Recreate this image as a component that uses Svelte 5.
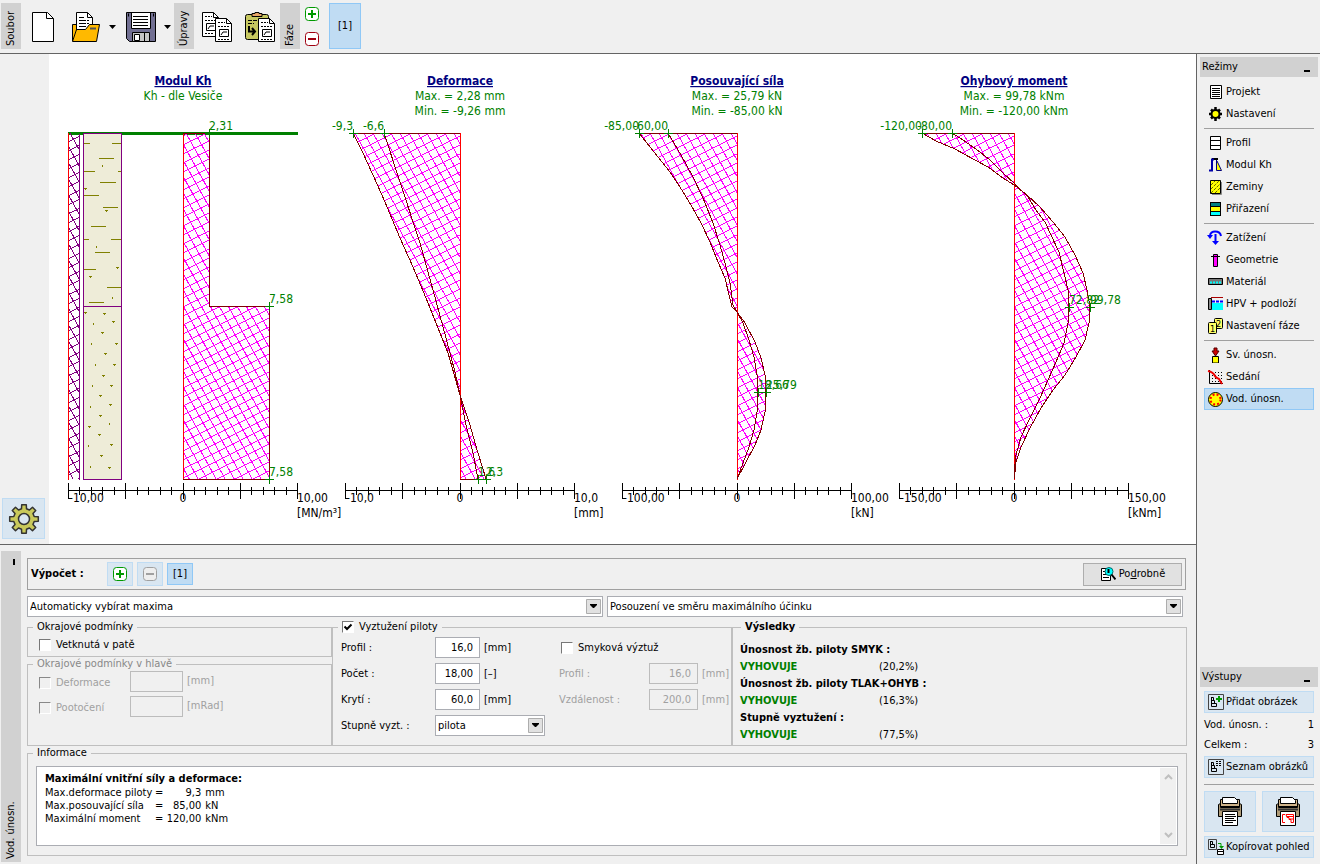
<script>
    const top = 79;
    const bottom = 425;

    const charts = [
        {
            x: 134,
            title: "Modul Kh",
            notes: ["Kh - dle Vesiče"],
            limit: "10,00",
            unit: "[MN/m³]",
            outer: [[0, 79], [26, 79], [26, 252], [86, 252], [86, 425]],
            inner: [],
            marks: [
                { x: 26, y: 79, text: "2,31" },
                { x: 86, y: 252, text: "7,58" },
                { x: 86, y: 425, text: "7,58" },
            ],
        },
        {
            x: 411,
            title: "Deformace",
            notes: ["Max. = 2,28 mm", "Min. = -9,26 mm"],
            limit: "10,0",
            unit: "[mm]",
            outer: [
                [-107, 79], [-97, 99], [-87, 121], [-75, 148], [-60, 184], [-47, 213], [-34, 244],
                [-24, 269], [-12, 299], [0, 341], [10, 371], [18, 399], [26, 425],
            ],
            inner: [
                [-76, 79], [-60, 128], [-40, 189], [-27, 236], [-14, 284], [-5, 318], [0, 341],
                [6, 371], [13, 399], [18, 425],
            ],
            marks: [
                { x: -107, y: 79, text: "-9,3" },
                { x: -76, y: 79, text: "-6,6" },
                { x: 18, y: 425, text: "1,6" },
                { x: 26, y: 425, text: "2,3" },
            ],
        },
        {
            x: 688,
            title: "Posouvající síla",
            notes: ["Max. = 25,79 kN", "Min. = -85,00 kN"],
            limit: "100,00",
            unit: "[kN]",
            outer: [
                [-98, 79], [-79, 103], [-67, 118], [-57, 133], [-46, 151], [-36, 169], [-27, 188],
                [-19, 208], [-12, 224], [-8, 241], [-5, 253], [0, 258], [8, 269], [18, 288], [24, 304],
                [28, 321], [29, 338], [28, 358], [24, 376], [18, 391], [9, 408], [0, 425],
            ],
            inner: [
                [-69, 79], [-56, 101], [-44, 123], [-34, 144], [-24, 169], [-17, 191], [-11, 213],
                [-7, 229], [-4, 251], [0, 258], [6, 269], [12, 286], [17, 303], [20, 321], [21, 338],
                [20, 358], [17, 376], [12, 393], [6, 409], [0, 425],
            ],
            marks: [
                { x: -98, y: 79, text: "-85,00" },
                { x: -69, y: 79, text: "-60,00" },
                { x: 21, y: 338, text: "18,66" },
                { x: 29, y: 338, text: "25,79" },
            ],
        },
        {
            x: 965,
            title: "Ohybový moment",
            notes: ["Max. = 99,78 kNm", "Min. = -120,00 kNm"],
            limit: "150,00",
            unit: "[kNm]",
            outer: [
                [-92, 79], [-78, 87], [-59, 95], [-41, 105], [-26, 113], [-11, 124], [0, 131], [12, 140],
                [26, 153], [39, 168], [51, 183], [61, 201], [69, 219], [73, 236], [76, 253], [75, 269],
                [71, 286], [62, 303], [51, 321], [39, 336], [27, 354], [16, 374], [7, 393], [2, 408],
                [1, 418], [0, 425],
            ],
            inner: [
                [-62, 79], [-51, 86], [-38, 95], [-24, 106], [-11, 119], [0, 129], [14, 143], [22, 156],
                [31, 168], [37, 181], [45, 198], [50, 219], [54, 236], [55, 253], [54, 269], [50, 289],
                [42, 308], [34, 326], [26, 344], [16, 364], [7, 383], [2, 401], [0, 419],
            ],
            marks: [
                { x: -92, y: 79, text: "-120,00" },
                { x: -62, y: 79, text: "-80,00" },
                { x: 55, y: 253, text: "72,82" },
                { x: 76, y: 253, text: "99,78" },
            ],
        },
    ];

    const ticks = Array.from({ length: 21 }, (_, i) => ({
        x: Math.round(-115 + i * 11.45),
        major: i % 5 === 0,
    }));

    const points = (list) => list.map((p) => p.join(",")).join(" ");
    const area = (list) => points([[0, top], ...list, [0, bottom]]);

    // two families of parallel lines, at right angles to each other
    const hatch = (left, right, step) => {
        let d = "";
        const width = right - left;
        const rise = width * 0.5;
        for (let y = top; y < bottom + rise + step; y += step) {
            d += `M${left} ${y}L${right} ${y - rise}`;
        }
        const fall = width * 1.8;
        for (let y = top - fall; y < bottom; y += step * 1.8) {
            d += `M${left} ${y}L${right} ${y + fall}`;
        }
        return d;
    };
    const magenta = hatch(-120, 120, 9);
    const violet = hatch(-115, -104, 9);

    // outline of the settings gear, eight teeth
    const gear = Array.from({ length: 8 }, (_, i) =>
        [[-14, 10.5], [-9, 14.5], [9, 14.5], [14, 10.5]].map(([deg, r]) => {
            const a = ((i * 45 + deg) * Math.PI) / 180;
            return [(r * Math.sin(a)).toFixed(1), (-r * Math.cos(a)).toFixed(1)];
        })
    ).flat();

    // clay dashes: x, y, length
    const dashes = [
        [-99, 89, 6], [-71, 89, 9], [-84, 104, 15], [-99, 117, 11], [-65, 117, 3], [-83, 128, 16],
        [-99, 141, 15], [-80, 153, 15], [-92, 172, 15], [-99, 185, 5], [-72, 185, 10], [-88, 198, 15],
        [-99, 215, 12], [-76, 233, 14], [-94, 248, 15],
    ];
    // sand grains
    const grains = [
        [-81, 111], [-98, 134], [-77, 156], [-87, 192], [-66, 213], [-93, 222], [-71, 243], [-98, 258],
        [-79, 259], [-90, 269], [-70, 267], [-81, 278], [-92, 289], [-67, 289], [-78, 299], [-88, 310],
        [-69, 310], [-80, 321], [-91, 331], [-72, 331], [-83, 341], [-93, 352], [-73, 350], [-83, 361],
        [-74, 369], [-94, 372], [-84, 380], [-95, 391], [-72, 390], [-82, 401], [-93, 412], [-74, 413],
    ];

    const icons = {
        project: `<path d="M3.5 1.5h11v13h-11z" fill="#fff" stroke="#000"/><path d="M5 4.5h8M5 6.5h8M5 8.5h8M5 10.5h8M5 12.5h8" stroke="#000"/>`,
        settings: `<path d="M8.500 1v14M2 8h13M4 3.500l9 9M13 3.500l-9 9" stroke="#000" stroke-width="2.500"/><circle cx="8.500" cy="8" r="4" fill="#ff0" stroke="#000" stroke-width="2"/>`,
        profile: `<path d="M3.5 1.5h10v13h-10zM3.5 5.5h10M3.5 10.5h10" fill="#fff" stroke="#000"/>`,
        modul: `<path d="M5 2h6" stroke="#000" stroke-width="2"/><path d="M2 13.500h3v-11h2" fill="none" stroke="#00a" stroke-width="2"/><path d="M9.500 3v10.500h5L10 4" fill="#ff0" stroke="#000080"/>`,
        soils: `<path d="M14.5 3v12.500H5" fill="none" stroke="#888"/><path d="M3.5 1.5h10v13h-10z" fill="#ff0" stroke="#000"/><path d="M4 6l4-4M4 10l8-8M4 14l9-9M8 14l5-5" stroke="#660" stroke-dasharray="3 1"/>`,
        assign: `<path d="M3 1h11v14H3z"/><path d="M4 2h9v3H4z" fill="#008080"/><path d="M4 6h9v4H4z" fill="#ff0"/><path d="M4 11h9v3H4z" fill="#0ff"/>`,
        load: `<path d="M3 6c0-6 10-6 11 0" fill="none" stroke="#00f" stroke-width="2"/><path d="M0 5h6l-3 4z" fill="#00f"/><path d="M8.500 4v9" stroke="#00f" stroke-width="2"/><path d="M5 11h7l-3.500 4z" fill="#00f"/>`,
        geometry: `<path d="M6.5 2.5h4v12h-4z" fill="#f0f" stroke="#000"/><path d="M4 4.5h9" stroke="#000"/>`,
        material: `<path d="M1.5 4.5h14v6h-14z" fill="#777" stroke="#000"/><path d="M3 8.500h12" stroke="#0ff" stroke-width="2" stroke-dasharray="2 1"/>`,
        water: `<path d="M1.5 2.5h3v11h-3z" fill="#888" stroke="#000"/><path d="M4 1.5h12" stroke="#a00"/><path d="M5 7h11v7H5z" fill="#0ff"/><path d="M5 5.500h11" stroke="#00f" stroke-width="2" stroke-dasharray="3 1"/>`,
        phase: `<rect x="7.5" y=".5" width="8" height="10" rx="1" fill="#ff6" stroke="#000"/><rect x="1.5" y="4.5" width="8" height="11" rx="1" fill="#ff6" stroke="#000"/><text x="9" y="9" font-size="9">2</text><text x="3" y="14" font-size="9">1</text>`,
        vertical: `<path d="M5.5 9.5h6V16h-6z" fill="#ff0" stroke="#000"/><path d="M7 1h3v3h2l-3.500 5L5 4h2z" fill="#c00" stroke="#500"/>`,
        settlement: `<path d="M2 3.5h14M2 6.5h14M2 9.5h14M2 12.5h14" stroke="#000" stroke-dasharray="1 2"/><path d="M2.5 1v13.500H16" fill="none" stroke="#000"/><path d="M1 2c5 1 6 3 7 5s2 2 4 3l3 5" fill="none" stroke="#e00" stroke-width="2"/>`,
        horizontal: `<circle cx="8.500" cy="8.500" r="7" fill="#ff0" stroke="#000"/><circle cx="8.500" cy="8.500" r="5" fill="none" stroke="#f00" stroke-width="2" stroke-dasharray="2 2"/>`,
        addPicture: `<path d="M.5.5h15v15H.5z" fill="none" stroke="#444"/><path d="M3.5 3v9.500h5v-3h-5M6.5 9V6.500h-3M3.5 3.5h2v3" fill="none" stroke="#000"/><path d="M11 2v6M8 5h6" stroke="#090" stroke-width="2"/>`,
        pictureList: `<path d="M.5.5h15v15H.5z" fill="none" stroke="#444"/><path d="M3.5 3v9.500h5v-3h-5M6.5 9V6.500h-3M3.5 3.5h2v3" fill="none" stroke="#000"/><path d="M8 2.5h6M8 4.5h6M8 6.5h6" stroke="#000" stroke-dasharray="2 1"/>`,
        copyView: `<path d="M.5.5h8v10H.5z" fill="none" stroke="#444"/><path d="M2.5 2v6.500h4v-3h-4M4.5 5V2.500h-2" fill="none" stroke="#000"/><path d="M10 4.5h3V8" fill="none" stroke="#090"/><path d="M11 7h5l-2.500 3z" fill="#090"/><path d="M9.5 10.5h6v5h-6zM9.5 12.5h6" fill="#fff" stroke="#000"/>`,
        detail: `<path d="M1.5 2.5h9v12h-9z" fill="#fff" stroke="#000"/><path d="M3 11.5h6M3 8.5h3M3 5.5h2" stroke="#000"/><circle cx="9" cy="5.500" r="4" fill="#0ff" stroke="#066"/><path d="M8.500 3v4M11.500 8.500l4 5" stroke="#000" stroke-width="2"/>`,
        add: `<rect x="1.5" y="1.5" width="13" height="13" rx="3" fill="#fff" stroke="#090"/><path d="M4 8h8M8 4v8" stroke="#090" stroke-width="2"/>`,
        remove: `<rect x="1.5" y="1.5" width="13" height="13" rx="3" fill="#fff" stroke="#a00010"/><path d="M4 8h8" stroke="#a00010" stroke-width="2"/>`,
        removeOff: `<rect x="1.5" y="1.5" width="13" height="13" rx="3" fill="#eee" stroke="#a0a0a0"/><path d="M4 8h8" stroke="#a0a0a0" stroke-width="2"/>`,
    };

    const modes = [
        [["project", "Projekt"], ["settings", "Nastavení"]],
        [["profile", "Profil"], ["modul", "Modul Kh"], ["soils", "Zeminy"], ["assign", "Přiřazení"]],
        [
            ["load", "Zatížení"],
            ["geometry", "Geometrie"],
            ["material", "Materiál"],
            ["water", "HPV + podloží"],
            ["phase", "Nastavení fáze"],
        ],
        [["vertical", "Sv. únosn."], ["settlement", "Sedání"], ["horizontal", "Vod. únosn."]],
    ];
    let active = "horizontal";

    const results = [
        ["Únosnost žb. piloty SMYK :", "20,2%"],
        ["Únosnost žb. piloty TLAK+OHYB :", "16,3%"],
        ["Stupně vyztužení :", "77,5%"],
    ];
    const info = [
        ["Max.deformace piloty", "9,3", "mm"],
        ["Max.posouvající síla", "85,00", "kN"],
        ["Maximální moment", "120,00", "kNm"],
    ];
    const rebar = [
        { id: "profil", label: "Profil :", value: "16,0", unit: "[mm]" },
        { id: "pocet", label: "Počet :", value: "18,00", unit: "[–]" },
        { id: "kryti", label: "Krytí :", value: "60,0", unit: "[mm]" },
    ];
    const shear = [
        { id: "sprofil", label: "Profil :", value: "16,0", unit: "[mm]" },
        { id: "vzdal", label: "Vzdálenost :", value: "200,0", unit: "[mm]" },
    ];
    const head = [
        { label: "Deformace", unit: "[mm]" },
        { label: "Pootočení", unit: "[mRad]" },
    ];
</script>

{#snippet icon(name)}
    <svg class="icon" width="16" height="16" viewBox="0 0 16 16" aria-hidden="true">{@html icons[name]}</svg>
{/snippet}

{#snippet arrow()}
    <svg class="drop__arrow" width="15" height="15" viewBox="0 0 15 15" aria-hidden="true">
        <path d="M.5.5h14v14H.5z" fill="#e1e1e1" stroke="#adadad" />
        <path d="M4 5h7v1l-3 3h-1l-3-3z" />
    </svg>
{/snippet}

<div class="app">
    <header class="toolbar">
        <div class="vlabel">Soubor</div>
        <div class="tools tools--file">
            <button class="tool" aria-label="Nový">
                <svg width="24" height="32" viewBox="0 0 24 32">
                    <path d="M1.5 1.5h15l6 6v23h-21z" fill="#fff" stroke="#000" />
                    <path d="M15.5 1.5v6h7" fill="none" stroke="#000" />
                </svg>
            </button>
            <button class="tool" aria-label="Otevřít">
                <svg width="30" height="32" viewBox="0 0 30 32">
                    <path d="M1.5 30V13.500h5v8" fill="#ffb900" stroke="#000" />
                    <path d="M5.5 24.500v-23h11l5 5v14z" fill="#fff" stroke="#000" />
                    <path d="M16.5 1.5v5h5" fill="none" stroke="#000" />
                    <path d="M8 6.5h5M8 9.5h10M8 12.5h10M8 15.5h7" stroke="#000" stroke-dasharray="7 1" />
                    <path d="M1.5 30.500l4-12h9l4-5h10l-3 17z" fill="#ffb900" stroke="#000" />
                    <path d="M19 17.500h6" stroke="#555" stroke-width="2" />
                </svg>
            </button>
            <button class="tool tool--arrow" aria-label="Naposledy otevřené">
                <svg width="7" height="4" viewBox="0 0 7 4"><path d="M0 0h7L3.500 4z" /></svg>
            </button>
            <button class="tool" aria-label="Uložit">
                <svg width="30" height="32" viewBox="0 0 30 32">
                    <path d="M.5 1.5h29v29h-26l-3-3z" fill="#716f92" stroke="#000" />
                    <path d="M5.5 2v15.500h19V2" fill="#fff" stroke="#000" />
                    <path d="M7 5.5h15M7 8.5h15M7 11.5h15M7 14.5h15" stroke="#000" />
                    <path d="M2 4h1M27 4h1" stroke="#000" stroke-width="3" />
                    <path d="M6.5 30.500v-9h17v9z" fill="#c4c4c4" stroke="#000" />
                    <path d="M8.5 23.500h5v6h-5z" fill="#fff" stroke="#000" />
                    <path d="M18.5 22v8" stroke="#000" />
                </svg>
            </button>
            <button class="tool tool--arrow" aria-label="Uložit jako">
                <svg width="7" height="4" viewBox="0 0 7 4"><path d="M0 0h7L3.500 4z" /></svg>
            </button>
        </div>
        <div class="vlabel">Úpravy</div>
        <div class="tools tools--edit">
            <button class="tool" aria-label="Kopírovat">
                <svg width="32" height="32" viewBox="0 0 32 32">
                    <path d="M1.5 1.5h11l5 5v19h-16z" fill="#fff" stroke="#000" />
                    <path d="M12.5 1.5v5h5M5.5 12.5h9v7h-9zM7 18l2-3h4" fill="none" stroke="#000" />
                    <path d="M4 5.5h7M4 9.5h12M4 22.5h9" stroke="#000" stroke-dasharray="2 1" />
                    <path d="M14.5 7.5h11l5 5v18h-16z" fill="#fff" stroke="#000" />
                    <path d="M25.5 7.5v5h5M18.5 18.5h9v7h-9zM20 24l2-3h4" fill="none" stroke="#000" />
                    <path d="M17 11.5h7M17 15.5h12M17 28.5h12" stroke="#000" stroke-dasharray="2 1" />
                </svg>
            </button>
            <button class="tool" aria-label="Vložit">
                <svg width="32" height="32" viewBox="0 0 32 32">
                    <rect x="1.5" y="3.5" width="23" height="25" rx="2" fill="#c6c760" stroke="#000" />
                    <path d="M8 5.5h10v-3h-3v-1h-4v1H8z" fill="#e8a668" stroke="#000" />
                    <path d="M4 9.5h9M4 12.5h6" stroke="#000" stroke-dasharray="4 1" />
                    <path d="M5 15v5.500h6M8 17l3 3.500-3 3.500" fill="none" stroke="#000" stroke-width="2" />
                    <path d="M14.5 7.5h11l5 5v18h-16z" fill="#fff" stroke="#000" />
                    <path d="M25.5 7.5v5h5M18.5 18.5h9v7h-9zM20 24l2-3h4" fill="none" stroke="#000" />
                    <path d="M17 11.5h7M17 15.5h12M17 28.5h12" stroke="#000" stroke-dasharray="2 1" />
                </svg>
            </button>
        </div>
        <div class="vlabel">Fáze</div>
        <div class="phase">
            <button class="tool" aria-label="Přidat fázi">{@render icon("add")}</button>
            <button class="tool" aria-label="Odebrat fázi">{@render icon("remove")}</button>
        </div>
        <button class="tab tab--phase">[1]</button>
    </header>

    <div class="body">
        <main class="main">
            <section class="view">
                <div class="view__side">
                    <button class="soft soft--gear" aria-label="Nastavení kreslení">
                        <svg width="32" height="32" viewBox="-16 -16 32 32">
                            <polygon points={points(gear)} fill="#c9c95a" stroke="#333" stroke-width="1.5" stroke-linejoin="round" />
                            <circle r="5.5" fill="#d9e6f1" stroke="#333" stroke-width="1.5" />
                        </svg>
                    </button>
                </div>
                <svg class="view__charts" viewBox="0 0 1147 490" role="img" aria-label="Průběhy veličin po délce piloty">
                    <defs>
                        {#each charts as chart, i}
                            <clipPath id="area{i}"><polygon points={area(chart.outer)} /></clipPath>
                        {/each}
                        <clipPath id="pile"><rect x="-115" y={top} width="11" height={bottom - top} /></clipPath>
                    </defs>
                    <g transform="translate({charts[0].x} 0)">
                        <path class="soil__ground" d="M-115 79.5H115" />
                        <path class="soil__pile" clip-path="url(#pile)" d={violet} />
                        <path class="soil__axis" d="M-114.5 79v347" />
                        <path class="soil__edge" d="M-103.5 80v346" />
                        <path class="soil__layer" d="M-99.5 79.5h38v346h-38zM-99.5 252.5h38" />
                        {#each dashes as [x, y, w]}
                            <rect class="soil__grain" {x} {y} width={w} height="1" />
                        {/each}
                        {#each grains as [x, y], i}
                            <rect class="soil__grain" {x} {y} width="1" height="2" />
                            {#if i % 3}<rect class="soil__grain" x={x - 1} {y} width="3" height="1" />{/if}
                        {/each}
                    </g>
                    {#each charts as chart, i}
                        <g transform="translate({chart.x} 0)">
                            <path class="hatch" clip-path="url(#area{i})" d={magenta} />
                            <path class="base" d="M.5 79v347" />
                            <polyline class="curve" points={points([[0, top], ...chart.outer])} />
                            <polyline class="curve" points={points(chart.inner)} />
                            {#if chart.outer[chart.outer.length - 1][0] > 0}
                                <path class="curve" d="M0 425.5h{chart.outer[chart.outer.length - 1][0]}" />
                            {/if}
                            <text class="title" y="31">{chart.title}</text>
                            {#each chart.notes as note, n}
                                <text class="note" y={46 + n * 15}>{note}</text>
                            {/each}
                            {#each chart.marks as mark}
                                <path class="cross" d="M{mark.x - 4} {mark.y + 0.5}h9M{mark.x + 0.5} {mark.y - 4}v9" />
                                <text class="mark" class:mark--left={mark.x < 0} x={mark.x} y={mark.y - 3}>{mark.text}</text>
                            {/each}
                            <path class="axis" d="M-115 436.5H115M-114.5 444.5h3" />
                            {#each ticks as tick}
                                <path class="axis" d={tick.major ? `M${tick.x + 0.5} 429v16` : `M${tick.x + 0.5} 433v8`} />
                            {/each}
                            <text x="-114" y="448">-{chart.limit}</text>
                            <text class="zero" y="448">0</text>
                            <text x="114" y="448">{chart.limit}</text>
                            <text x="114" y="463">{chart.unit}</text>
                        </g>
                    {/each}
                </svg>
            </section>

            <section class="panel">
                <div class="vlabel vlabel--panel">
                    <span>Vod. únosn.</span>
                    <span class="vlabel__fold"></span>
                </div>
                <div class="panel__content">
                    <div class="calc">
                        <strong class="calc__title">Výpočet :</strong>
                        <button class="soft soft--small" aria-label="Přidat výpočet">{@render icon("add")}</button>
                        <button class="soft soft--small" aria-label="Odebrat výpočet" disabled>{@render icon("removeOff")}</button>
                        <button class="tab tab--calc">[1]</button>
                        <button class="detail">{@render icon("detail")}<span>Po<u>d</u>robně</span></button>
                    </div>
                    <div class="selects">
                        <span class="drop">
                            <select aria-label="Výběr maxim"><option>Automaticky vybírat maxima</option></select>
                            {@render arrow()}
                        </span>
                        <span class="drop">
                            <select aria-label="Směr posouzení"><option>Posouzení ve směru maximálního účinku</option></select>
                            {@render arrow()}
                        </span>
                    </div>
                    <div class="groups">
                        <div class="groups__left">
                            <fieldset>
                                <legend>Okrajové podmínky</legend>
                                <label class="check check--foot"><input type="checkbox" />Vetknutá v patě</label>
                            </fieldset>
                            <fieldset class="head" disabled>
                                <legend>Okrajové podmínky v hlavě</legend>
                                {#each head as row}
                                    <div class="head__row">
                                        <label class="check"><input type="checkbox" />{row.label}</label>
                                        <input type="text" aria-label={row.label} />
                                        <span>{row.unit}</span>
                                    </div>
                                {/each}
                            </fieldset>
                        </div>
                        <fieldset class="rebar">
                            <legend><label class="check"><input type="checkbox" checked />Vyztužení piloty</label></legend>
                            <div class="rebar__grid">
                                {#each rebar as row}
                                    <label for={row.id}>{row.label}</label>
                                    <input id={row.id} type="text" value={row.value} />
                                    <span>{row.unit}</span>
                                {/each}
                                <label for="stupne">Stupně vyzt. :</label>
                                <span class="drop drop--small">
                                    <select id="stupne"><option>pilota</option></select>
                                    {@render arrow()}
                                </span>
                            </div>
                            <div class="shear">
                                <label class="check shear__check"><input type="checkbox" />Smyková výztuž</label>
                                {#each shear as row}
                                    <label class="off" for={row.id}>{row.label}</label>
                                    <input id={row.id} type="text" value={row.value} disabled />
                                    <span class="off">{row.unit}</span>
                                {/each}
                            </div>
                        </fieldset>
                        <fieldset class="results">
                            <legend>Výsledky</legend>
                            {#each results as [name, use]}
                                <p class="results__name">{name}</p>
                                <p class="results__row"><b>VYHOVUJE</b><span>({use})</span></p>
                            {/each}
                        </fieldset>
                    </div>
                    <fieldset class="info">
                        <legend>Informace</legend>
                        <div class="info__box">
                            <div class="info__text">
                                <h2>Maximální vnitřní síly a deformace:</h2>
                                <table>
                                    <tbody>
                                        {#each info as [name, value, unit]}
                                            <tr><td>{name}</td><td>=</td><td class="num">{value}</td><td>{unit}</td></tr>
                                        {/each}
                                    </tbody>
                                </table>
                            </div>
                            <div class="info__scroll">
                                <svg width="9" height="6" viewBox="0 0 9 6"><path d="M1 5l3.500-3.500L8 5" /></svg>
                                <svg width="9" height="6" viewBox="0 0 9 6"><path d="M1 1l3.500 3.500L8 1" /></svg>
                            </div>
                        </div>
                    </fieldset>
                </div>
            </section>
        </main>

        <aside class="side">
            <h3 class="side__head">Režimy<span class="fold"></span></h3>
            <nav class="modes">
                {#each modes as group}
                    <div class="modes__group">
                        {#each group as [name, label]}
                            <button class="mode" class:mode--active={active === name} on:click={() => (active = name)}>
                                {@render icon(name)}{label}
                            </button>
                        {/each}
                    </div>
                {/each}
            </nav>
            <h3 class="side__head">Výstupy<span class="fold"></span></h3>
            <div class="outputs">
                <button class="soft soft--wide">{@render icon("addPicture")}Přidat obrázek</button>
                <div class="outputs__counts">
                    <div class="count"><span>Vod. únosn. :</span><span>1</span></div>
                    <div class="count"><span>Celkem :</span><span>3</span></div>
                </div>
                <button class="soft soft--wide">{@render icon("pictureList")}Seznam obrázků</button>
                <div class="outputs__print">
                    <button class="soft soft--print" aria-label="Tisk protokolu">
                        <svg width="26" height="32" viewBox="0 0 26 32">
                            <path d="M3.5 10.5v-7h19v7z" fill="#d0b48a" stroke="#000" />
                            <path d="M5.5 7.5v-6h12l3 3v3z" fill="#fff" stroke="#000" />
                            <path d="M1.5 8.5l2-1v4h19v-4l2 1v12h-23z" fill="#b09c78" stroke="#000" />
                            <path d="M3 13.5h20" stroke="#333" stroke-width="2" />
                            <path d="M5.5 15.5h15v14h-15z" fill="#fff" stroke="#000" />
                            <path d="M8 18.5h10M8 20.5h11M8 22.5h9M8 24.5h11M8 26.5h8" stroke="#000" />
                        </svg>
                    </button>
                    <button class="soft soft--print" aria-label="Tisk obrázku">
                        <svg width="26" height="32" viewBox="0 0 26 32">
                            <path d="M3.5 10.5v-7h19v7z" fill="#d0b48a" stroke="#000" />
                            <path d="M5.5 7.5v-6h12l3 3v3z" fill="#fff" stroke="#000" />
                            <path d="M1.5 8.5l2-1v4h19v-4l2 1v12h-23z" fill="#b09c78" stroke="#000" />
                            <path d="M3 13.5h20" stroke="#333" stroke-width="2" />
                            <path d="M5.5 15.5h15v14h-15z" fill="#fff" stroke="#000" />
                            <path d="M10 18.5H7.500v8H10M11 18.5h7.500v8H16v-3h-2v-2h-2zM12 20.5h6M14 23h4" fill="none" stroke="#f00" />
                        </svg>
                    </button>
                </div>
                <button class="soft soft--wide">{@render icon("copyView")}Kopírovat pohled</button>
            </div>
        </aside>
    </div>
</div>

<style>
    :global(body) {
        margin: 0;
        background: #f0f0f0;
    }
    .app {
        display: flex;
        flex-direction: column;
        min-height: 100vh;
        color: #000;
        font: 11px/14px Tahoma, "DejaVu Sans Condensed", "Noto Sans", sans-serif;
    }
    button,
    input,
    select {
        box-sizing: border-box;
        margin: 0;
        border-radius: 0;
        color: inherit;
        font: inherit;
    }
    button {
        padding: 0;
        border: 0;
        background: none;
    }
    svg {
        display: block;
        flex: none;
    }

    /* toolbar */
    .toolbar {
        display: flex;
        height: 53px;
        border-bottom: 1px solid #646464;
    }
    .vlabel {
        box-sizing: border-box;
        width: 20px;
        height: 46px;
        margin: 3px 0 0 1px;
        padding-top: 3px;
        background: #d1d1d1;
        line-height: 20px;
        writing-mode: vertical-rl;
        transform: rotate(180deg);
    }
    .tools {
        display: flex;
        align-items: center;
    }
    .tools--file {
        gap: 8px;
        padding: 0 2px 0 10px;
    }
    .tools--edit {
        gap: 11px;
        padding: 0 3px 0 7px;
    }
    .tool {
        display: flex;
        align-items: center;
        justify-content: center;
    }
    .tools--file .tool + .tool:not(.tool--arrow) {
        margin-left: 8px;
    }
    .tools--file .tool--arrow + .tool:not(.tool--arrow) {
        margin-left: 2px;
    }
    .phase {
        display: flex;
        flex-direction: column;
        gap: 9px;
        padding: 6px 9px 0 4px;
    }
    .tab {
        border: 1px solid #90c8f6;
        background: #c0dcf3;
    }
    .tab--phase {
        width: 32px;
        height: 46px;
        margin-top: 3px;
    }

    /* drawing area */
    .body {
        display: flex;
        flex: 1;
    }
    .main {
        display: flex;
        flex: 1;
        flex-direction: column;
        min-width: 0;
    }
    .view {
        display: flex;
        flex: 1;
        min-height: 0;
        border-bottom: 1px solid #646464;
        background: #fff;
    }
    .view__side {
        display: flex;
        flex: none;
        align-items: flex-end;
        box-sizing: border-box;
        width: 49px;
        padding: 0 0 5px 2px;
        background: #f0f0f0;
    }
    .view__charts {
        flex: 1;
        min-width: 0;
        font-size: 12px;
        shape-rendering: crispEdges;
    }
    .soil__ground {
        stroke: #008000;
        stroke-width: 3;
    }
    .soil__pile,
    .soil__edge {
        fill: none;
        stroke: #800080;
    }
    .soil__axis,
    .base {
        stroke: #f00;
    }
    .soil__layer {
        fill: #eeecd8;
        stroke: #800080;
    }
    .soil__grain {
        fill: #808000;
    }
    .hatch {
        fill: none;
        stroke: #f0f;
    }
    .curve {
        fill: none;
        stroke: #800000;
    }
    .cross {
        fill: none;
        stroke: #008000;
    }
    .axis {
        fill: none;
        stroke: #000;
    }
    .title {
        fill: #000080;
        font-weight: bold;
        text-anchor: middle;
        text-decoration: underline;
    }
    .note {
        fill: #008000;
        text-anchor: middle;
    }
    .mark {
        fill: #008000;
    }
    .mark--left {
        text-anchor: end;
    }
    .zero {
        text-anchor: middle;
    }

    /* soft blue buttons */
    .soft {
        display: flex;
        align-items: center;
        justify-content: center;
        border: 1px solid #c0dcf3;
        background: #d9e6f1;
    }
    .soft--gear {
        width: 43px;
        height: 41px;
    }
    .soft--small {
        width: 26px;
        height: 24px;
    }
    .soft--wide {
        justify-content: flex-start;
        gap: 2px;
        width: 100%;
        height: 22px;
        padding-left: 3px;
        white-space: nowrap;
    }
    .soft--print {
        flex: 1;
        height: 41px;
    }

    /* lower panel */
    .panel {
        display: flex;
        padding: 6px 9px 2px 0;
    }
    .vlabel--panel {
        display: flex;
        flex: none;
        justify-content: space-between;
        align-items: center;
        height: auto;
        margin-top: 0;
    }
    .vlabel__fold {
        align-self: flex-start;
        width: 2px;
        height: 6px;
        margin: 0 12px 8px 0;
        background: #000;
    }
    .panel__content {
        flex: 1;
        min-width: 0;
        padding: 7px 0 6px 6px;
    }
    .calc {
        display: flex;
        align-items: center;
        gap: 4px;
        box-sizing: border-box;
        height: 32px;
        margin-right: 1px;
        padding: 0 3px;
        border: 1px solid #a0a0a0;
    }
    .calc__title {
        width: 72px;
    }
    .tab--calc {
        width: 26px;
        height: 22px;
    }
    .detail {
        display: flex;
        align-items: center;
        justify-content: center;
        gap: 3px;
        width: 99px;
        height: 23px;
        margin-left: auto;
        border: 1px solid #adadad;
        background: #e1e1e1;
    }
    .selects {
        display: grid;
        grid-template-columns: 1fr 1fr;
        gap: 4px;
        margin: 6px 4px 3px 0;
    }
    .drop {
        display: grid;
        grid-template-columns: minmax(0, 1fr);
        align-items: center;
    }
    .drop select {
        grid-area: 1 / 1;
        width: 100%;
        height: 21px;
        padding: 0 2px;
        border: 1px solid #abadb3;
        appearance: none;
        background: #fff;
    }
    .drop__arrow {
        grid-area: 1 / 1;
        justify-self: end;
        margin-right: 2px;
        pointer-events: none;
    }
    fieldset {
        min-width: 0;
        margin: 0;
        padding: 0;
        border: 1px solid #bfbfbf;
    }
    legend {
        margin-left: 5px;
        padding: 0 4px;
    }
    .groups {
        display: grid;
        grid-template-columns: 305px 400px 1fr;
        min-height: 126px;
    }
    .groups__left {
        display: flex;
        flex-direction: column;
    }
    .groups__left .head {
        flex: 1;
        color: #888;
    }
    .check {
        display: flex;
        align-items: center;
        gap: 5px;
    }
    .check input {
        width: 12px;
        height: 12px;
        border: 1px solid;
        border-color: #777 #fff #fff #777;
        appearance: none;
        background: #fff;
    }
    .check input:checked {
        background: #fff url("data:image/svg+xml,%3Csvg xmlns='http://www.w3.org/2000/svg' viewBox='0 0 10 10'%3E%3Cpath d='M1.500 4.500l2.500 2.500L8.500 2.500' fill='none' stroke='%23000' stroke-width='2'/%3E%3C/svg%3E");
    }
    .check--foot {
        height: 22px;
        padding-left: 11px;
    }
    input[type="text"] {
        width: 100%;
        height: 21px;
        padding: 0 6px 0 2px;
        border: 1px solid #abadb3;
        background: #fff;
        text-align: right;
    }
    input[type="text"]:disabled {
        border-color: #bcbcbc;
        background: #f0f0f0;
    }
    .check input:disabled {
        border-color: #888 #fff #fff #888;
        background: #f0f0f0;
    }
    .off,
    .shear input:disabled,
    .head label,
    .head span {
        color: #a0a0a0;
    }
    .head__row {
        display: grid;
        grid-template-columns: 87px 53px auto;
        column-gap: 4px;
        height: 25px;
        padding-left: 11px;
    }
    .head__row .check {
        height: 23px;
    }
    .head__row span {
        line-height: 20px;
    }
    .rebar {
        display: grid;
        grid-template-columns: 226px auto;
        align-content: start;
    }
    .rebar__grid,
    .shear {
        display: grid;
        align-content: start;
        align-items: center;
        grid-auto-rows: 21px;
        row-gap: 5px;
        column-gap: 4px;
        padding-top: 3px;
    }
    .rebar__grid {
        grid-template-columns: 90px 45px auto;
        padding-left: 8px;
    }
    .drop--small {
        grid-column: 2 / 4;
        width: 110px;
    }
    .shear {
        grid-template-columns: 86px 49px auto;
    }
    .shear__check {
        grid-column: 1 / 4;
        padding-left: 2px;
    }
    .results legend {
        margin-left: 8px;
        font-weight: bold;
    }
    .results p {
        margin: 0 0 0 7px;
        line-height: 17px;
    }
    .results legend + p {
        margin-top: 7px;
    }
    .results__name {
        font-weight: bold;
    }
    .results__row b {
        display: inline-block;
        width: 139px;
        color: #008000;
    }
    .info {
        padding: 6px 8px 9px;
    }
    .info legend {
        margin-left: -3px;
    }
    .info__box {
        display: flex;
        box-sizing: border-box;
        height: 80px;
        border: 1px solid #abadb3;
        background: #fff;
    }
    .info__text {
        flex: 1;
        padding: 5px 8px;
        line-height: 13px;
    }
    .info h2 {
        margin: 0;
        font-size: 11px;
        line-height: 14px;
    }
    table {
        border-spacing: 0;
    }
    td {
        padding: 0 2px 0 0;
    }
    td:first-child {
        width: 108px;
    }
    .num {
        width: 36px;
        padding-right: 4px;
        text-align: right;
    }
    .info__scroll {
        display: flex;
        flex-direction: column;
        justify-content: space-between;
        align-items: center;
        width: 16px;
        margin: 1px;
        padding: 6px 0;
        background: #f0f0f0;
    }
    .info__scroll path {
        fill: none;
        stroke: #bfbfbf;
        stroke-width: 2;
    }

    /* right side */
    .side {
        display: flex;
        flex: none;
        flex-direction: column;
        box-sizing: border-box;
        width: 124px;
        padding: 3px 2px 6px 3px;
        border-left: 1px solid #646464;
    }
    .side__head {
        display: flex;
        align-items: center;
        height: 20px;
        margin: 0;
        padding: 0 8px 0 2px;
        background: #d1d1d1;
        font-size: 11px;
        font-weight: normal;
    }
    .fold {
        width: 6px;
        height: 2px;
        margin: 8px 0 0 auto;
        background: #000;
    }
    .modes {
        flex: 1;
        padding: 4px 4px 0;
    }
    .modes__group + .modes__group {
        margin-top: 3px;
        padding-top: 3px;
        border-top: 1px solid #a0a0a0;
    }
    .mode {
        display: flex;
        align-items: center;
        gap: 3px;
        width: 100%;
        height: 22px;
        padding-left: 2px;
        border: 1px solid transparent;
        white-space: nowrap;
    }
    .mode--active {
        border-color: #90c8f6;
        background: #c0dcf3;
    }
    .outputs {
        padding: 4px 4px 0;
    }
    .outputs__counts {
        padding: 2px 0 1px;
    }
    .count {
        display: flex;
        justify-content: space-between;
        line-height: 20px;
    }
    .outputs__print {
        display: flex;
        gap: 6px;
        margin: 6px 0 4px;
        padding-top: 6px;
        border-top: 1px solid #a0a0a0;
    }
</style>
